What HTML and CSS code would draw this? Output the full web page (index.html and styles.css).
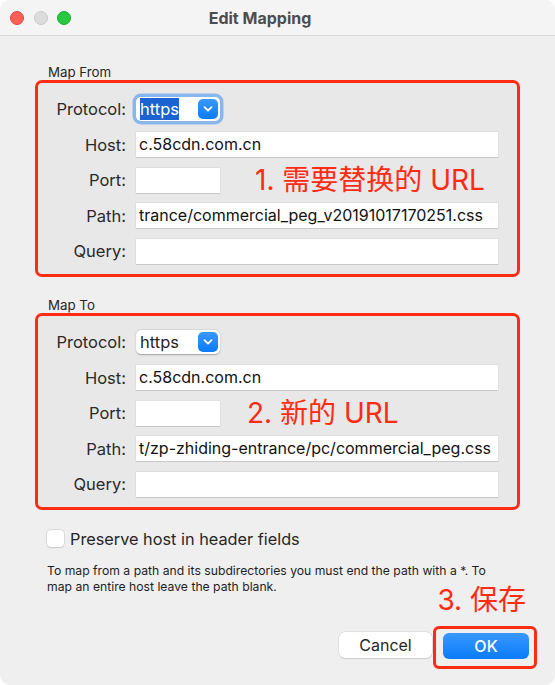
FILE: index.html
```html
<!DOCTYPE html>
<html>
<head>
<meta charset="utf-8">
<link rel="stylesheet" href="styles.css">
</head>
<body>
<div class="window">
  <div class="titlebar">
    <div class="lights">
      <span class="light red"></span>
      <span class="light gray"></span>
      <span class="light green"></span>
    </div>
    <div class="title">Edit Mapping</div>
  </div>
  <div class="content">
    <section class="group">
      <div class="group-title">Map From</div>
      <div class="group-box">
        <div class="row">
          <span class="label">Protocol:</span>
          <div class="select focused"><span class="sel-text"><span class="hl">https</span></span><span class="chev"><svg width="10" height="6" viewBox="0 0 10 6"><path d="M1.5 1.2 L5 4.6 L8.5 1.2" fill="none" stroke="#fff" stroke-width="1.8" stroke-linecap="round" stroke-linejoin="round"/></svg></span></div>
        </div>
        <div class="row">
          <span class="label">Host:</span>
          <div class="field">c.58cdn.com.cn</div>
        </div>
        <div class="row">
          <span class="label">Port:</span>
          <div class="port-line"><div class="field short"></div><span class="note note1">1. 需要替换的 URL</span></div>
        </div>
        <div class="row">
          <span class="label">Path:</span>
          <div class="field">trance/commercial_peg_v20191017170251.css</div>
        </div>
        <div class="row">
          <span class="label">Query:</span>
          <div class="field"></div>
        </div>
      </div>
    </section>
    <section class="group second">
      <div class="group-title">Map To</div>
      <div class="group-box">
        <div class="row">
          <span class="label">Protocol:</span>
          <div class="select"><span class="sel-text">https</span><span class="chev"><svg width="10" height="6" viewBox="0 0 10 6"><path d="M1.5 1.2 L5 4.6 L8.5 1.2" fill="none" stroke="#fff" stroke-width="1.8" stroke-linecap="round" stroke-linejoin="round"/></svg></span></div>
        </div>
        <div class="row">
          <span class="label">Host:</span>
          <div class="field">c.58cdn.com.cn</div>
        </div>
        <div class="row">
          <span class="label">Port:</span>
          <div class="port-line"><div class="field short"></div><span class="note note2">2. 新的 URL</span></div>
        </div>
        <div class="row">
          <span class="label">Path:</span>
          <div class="field">t/zp-zhiding-entrance/pc/commercial_peg.css</div>
        </div>
        <div class="row">
          <span class="label">Query:</span>
          <div class="field"></div>
        </div>
      </div>
    </section>
    <label class="check-row"><span class="checkbox"></span><span class="check-text">Preserve host in header fields</span></label>
    <p class="help">To map from a path and its subdirectories you must end the path with a *. To<br>map an entire host leave the path blank.</p>
  </div>
  <div class="footer">
    <div class="note note3">3. 保存</div>
    <div class="buttons">
      <button class="btn cancel">Cancel</button>
      <div class="ok-mark"><button class="btn ok">OK</button></div>
    </div>
  </div>
</div>
</body>
</html>
```

FILE: styles.css
```css
* { box-sizing: border-box; }
html, body { margin: 0; padding: 0; background: #ffffff; }
body { font-family: Inter, "Noto Sans", sans-serif; color: #262626; }

.window {
  width: 555px;
  height: 685px;
  background: #efefef;
  border-radius: 10px;
  overflow: hidden;
}

.titlebar {
  height: 36px;
  background: #f5f4f5;
  border-bottom: 1px solid #d9d9d9;
  display: grid;
  align-items: center;
}
.lights, .title { grid-area: 1 / 1; }
.lights { display: flex; gap: 9.5px; padding-left: 10px; }
.light { width: 14px; height: 14px; border-radius: 50%; display: block; }
.light.red { background: #fe5f57; border: 0.5px solid #e2463f; }
.light.gray { background: #dcdcdc; border: 0.5px solid #c9c9c9; }
.light.green { background: #28c840; border: 0.5px solid #1ea932; }
.title {
  text-align: center;
  padding-right: 35px;
  font-weight: 700;
  font-size: 16px;
  color: #4d4d4d;
}

.content { padding: 28px 35px 0 35px; }

.group-title {
  font-size: 13.3px;
  line-height: 16px;
  height: 16px;
  margin-left: 13px;
  color: #262626;
}
.group.second { margin-top: 20px; }

.group-box {
  border: 3px solid #ff2b12;
  border-radius: 7px;
  background: #e8e8e8;
  padding: 13.5px 19px 10.5px 0;
  display: flex;
  flex-direction: column;
  gap: 10.5px;
}

.row {
  display: grid;
  grid-template-columns: 88px 1fr;
  column-gap: 10px;
  align-items: center;
  min-height: 25px;
}
.label {
  text-align: right;
  font-size: 16.5px;
  color: #2a2a2a;
}

.field {
  height: 25px;
  background: #ffffff;
  box-shadow: 0 1px 0 #c9c9c9, 0 0 0 0.5px #d6d6d6;
  font-size: 16px;
  line-height: 25px;
  padding-left: 3px;
  white-space: nowrap;
  overflow: hidden;
  color: #111;
}
.field.short { width: 84px; flex: none; }

.port-line { display: flex; align-items: center; }

.note {
  font-family: Inter, "Noto Sans CJK SC", sans-serif;
  color: #ff2b12;
  font-size: 28px;
  line-height: 24px;
  white-space: nowrap;
}
.note1 { margin-left: 35px; }
.note2 { margin-left: 27px; }

.select {
  width: 84px;
  height: 24px;
  background: #ffffff;
  border-radius: 5px;
  box-shadow: 0 0.5px 1.5px rgba(0,0,0,0.3);
  display: flex;
  align-items: center;
  justify-content: space-between;
  padding: 0 2px 0 4px;
  font-size: 16.5px;
}
.select.focused {
  box-shadow: 0 0 0 3.5px #8ab6ec, 0 0.5px 1.5px rgba(0,0,0,0.3);
}
.hl {
  background: #1b62d3;
  color: #ffffff;
  padding: 1px 0 1px 0;
}
.chev {
  width: 20px;
  height: 20px;
  border-radius: 5px;
  background: linear-gradient(#3a98ff, #0a7bf8);
  display: flex;
  align-items: center;
  justify-content: center;
}

.check-row {
  display: flex;
  align-items: center;
  gap: 6px;
  margin: 20px 0 0 12px;
  height: 17px;
}
.checkbox {
  width: 17px;
  height: 17px;
  border-radius: 4px;
  background: #fff;
  box-shadow: 0 0 0 0.5px #c6c6c6, 0 0.5px 1px rgba(0,0,0,0.15);
}
.check-text { font-size: 16.3px; color: #262626; }

.help {
  margin: 16px 0 0 12px;
  font-size: 12.2px;
  line-height: 16px;
  color: #1e1e1e;
  white-space: nowrap;
}

.footer {
  display: flex;
  flex-direction: column;
  align-items: flex-end;
  padding-right: 18px;
  margin-top: -7px;
}
.note3 {
  margin-right: 11px;
}
.buttons {
  display: flex;
  align-items: flex-start;
  gap: 1px;
  margin-top: 14px;
}
.btn {
  font-family: Inter, "Noto Sans", sans-serif;
  font-size: 16px;
  height: 26px;
  border: none;
  border-radius: 6px;
  padding: 0;
  margin-top: 6px;
}
.cancel {
  width: 93px;
  background: #ffffff;
  color: #262626;
  box-shadow: 0 0 0 0.5px #cfcfcf, 0 1px 1px rgba(0,0,0,0.15);
}
.ok-mark {
  border: 3px solid #ff2b12;
  border-radius: 6px;
  padding: 4px 5px 7px 7px;
}
.ok {
  margin-top: 0;
  width: 86px;
  background: linear-gradient(#3a98ff, #0a7bf8);
  color: #ffffff;
  font-weight: 500;
}
```
